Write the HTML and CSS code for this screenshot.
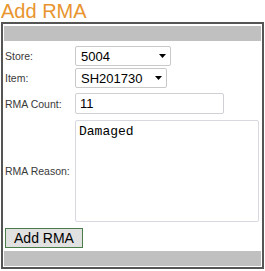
FILE: index.html
```html
<!DOCTYPE html>
<html>
<head>
<meta charset="utf-8">
<title>Add RMA</title>
<link rel="stylesheet" href="styles.css">
</head>
<body>
<h1 class="title">Add RMA</h1>
<div class="panel">
  <div class="bar"></div>
  <div class="row row-store">
    <span class="label">Store:</span>
    <div class="select select-store"><span>5004</span><svg class="arrow" width="7" height="4" viewBox="0 0 7 4"><path d="M0 0H7L3.5 4Z" fill="#000"/></svg></div>
  </div>
  <div class="row row-item">
    <span class="label">Item:</span>
    <div class="select select-item"><span>SH201730</span><svg class="arrow" width="7" height="4" viewBox="0 0 7 4"><path d="M0 0H7L3.5 4Z" fill="#000"/></svg></div>
  </div>
  <div class="row row-count">
    <span class="label">RMA Count:</span>
    <input class="input" type="text" value="11">
  </div>
  <div class="row row-reason">
    <span class="label">RMA Reason:</span>
    <textarea class="textarea">Damaged</textarea>
  </div>
  <div class="actions">
    <button class="button" type="button">Add RMA</button>
  </div>
  <div class="bar bar-bottom"></div>
</div>
</body>
</html>
```
FILE: styles.css
```css
html, body {
  margin: 0;
  padding: 0;
  background: #fff;
}
body {
  font-family: "Liberation Sans", Arial, sans-serif;
}
.title {
  margin: 0;
  padding-left: 1px;
  font-size: 20px;
  line-height: 22px;
  font-weight: normal;
  color: #e8952f;
}
.panel {
  margin: 0 1px;
  border: 2px solid #555;
  padding: 2px 1px 1px;
  display: flex;
  flex-direction: column;
}
.bar {
  height: 15px;
  background: #c0c0c0;
}
.bar-bottom {
  margin-top: 3px;
}
.row {
  display: flex;
  align-items: center;
  padding-left: 1px;
}
.row-store { margin-top: 5px; }
.row-item { margin-top: 2px; }
.row-count { margin-top: 5px; }
.row-reason { margin-top: 6px; }
.label {
  width: 70px;
  flex: none;
  font-size: 10.5px;
  color: #3a3a3a;
}
.select {
  box-sizing: border-box;
  display: flex;
  align-items: center;
  height: 20px;
  border: 1px solid #c9c9c9;
  border-radius: 2px;
  padding: 0 4px 0 5px;
  background: #fff;
  font-size: 13px;
  color: #000;
}
.select-store { width: 96px; }
.select-item { width: 92px; }
.arrow {
  margin-left: auto;
  flex: none;
}
.input {
  box-sizing: border-box;
  width: 149px;
  height: 21px;
  margin: 0;
  border: 1px solid #cfcfd4;
  border-radius: 2px;
  padding: 0 4px;
  font-family: "Liberation Sans", Arial, sans-serif;
  font-size: 13px;
  color: #000;
  outline: none;
}
.textarea {
  box-sizing: border-box;
  width: 184px;
  height: 102px;
  margin: 0;
  border: 1px solid #d8d8e0;
  border-radius: 2px;
  padding: 3px 3px;
  font-family: "Liberation Mono", "Courier New", monospace;
  font-size: 13px;
  line-height: 15px;
  color: #000;
  resize: none;
  outline: none;
}
.actions {
  display: flex;
  margin-top: 6px;
  padding-left: 1px;
}
.button {
  box-sizing: border-box;
  width: 78px;
  height: 20px;
  margin: 0;
  padding: 0;
  border: 1px solid #4b7d4b;
  background: #e1e1e1;
  font-family: "Liberation Sans", Arial, sans-serif;
  font-size: 14px;
  color: #000;
}
```
